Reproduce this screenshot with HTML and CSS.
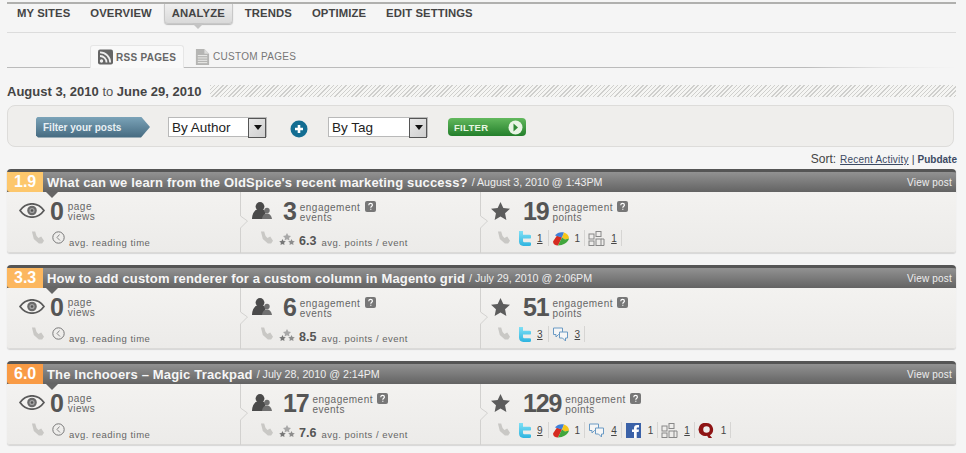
FILE: index.html
```html
<!DOCTYPE html>
<html lang="en">
<head>
<meta charset="utf-8">
<title>Analyze</title>
<link rel="stylesheet" href="styles.css">
</head>
<body>
<svg class="defs" width="0" height="0">
  <defs><linearGradient id="g-tw" x1="0" y1="0" x2="0" y2="1"><stop offset="0" stop-color="#7fe0f5"/><stop offset="1" stop-color="#2fb4e0"/></linearGradient></defs>
  <symbol id="i-eye" viewBox="0 0 26 15"><path d="M1 7.500C5 2 9 .8 13 .8S21 2 25 7.500C21 13 17 14.200 13 14.200S5 13 1 7.500Z" fill="#f4f3f1" stroke="#5a5a5a" stroke-width="1.700"/><circle cx="13" cy="7.500" r="4.800" fill="#6b6b6b"/><circle cx="13" cy="7.500" r="2.600" fill="#a5a5a5"/><circle cx="13" cy="7.500" r="1.300" fill="#555"/></symbol>
  <symbol id="i-people" viewBox="0 0 20 17"><circle cx="8" cy="4.500" r="4.400" fill="#4a4a4a"/><path d="M0 17c0-5 2-8.500 5-9.500h6c1.500.5 2.500 1.300 3 2.500l-3 7Z" fill="#4a4a4a"/><circle cx="15" cy="8.500" r="2.700" fill="#707070"/><path d="M10 17c.2-3 2-5.500 5-5.500s4.500 2.500 5 5.500Z" fill="#707070"/></symbol>
  <symbol id="i-star" viewBox="0 0 20 19"><path d="M10 0l3 6.400 7 .8-5.200 4.700L16.200 19 10 15.400 3.800 19l1.400-7.100L0 7.200l7-.8Z" fill="#5c5c5c"/></symbol>
  <symbol id="i-hook" viewBox="0 0 14 13"><path d="M1 0h3.500l1.500 5 2 2 3-1.500L14 10l-2 3H8.500L3 8Z" fill="#c9c8c5"/></symbol>
  <symbol id="i-clock" viewBox="0 0 13 13"><circle cx="6.500" cy="6.500" r="5.700" fill="none" stroke="#777" stroke-width="1"/><path d="M7.500 3.500 5 6.500l3 3" fill="none" stroke="#888" stroke-width="1"/></symbol>
  <symbol id="i-stars" viewBox="0 0 16 13"><path d="M8 0l1.300 2.600 2.700.4-2 1.900.5 2.700L8 6.300 5.500 7.600 6 4.900 4 3l2.700-.4Z" fill="#a8a8a8"/><path d="M3.500 6l1 2 2.300.3-1.700 1.500.4 2.200-2-1.100-2 1.100.4-2.200L.2 8.300 2.500 8Z" fill="#777"/><path d="M12.500 6l1 2 2.300.3-1.700 1.500.4 2.200-2-1.100-2 1.100.4-2.200-1.700-1.500L11.500 8Z" fill="#8d8d8d"/></symbol>
  <symbol id="i-twitter" viewBox="0 0 13 15"><path d="M1 0h4v3.800h6.500a1.800 1.800 0 0 1 0 3.700H5v2.200c0 1 .8 1.500 1.700 1.500h4.800a1.800 1.800 0 0 1 0 3.700H5.500C2.800 15 1 13.200 1 10.500Z" fill="url(#g-tw)"/></symbol>
  <symbol id="i-buzz" viewBox="0 0 17 14"><path d="M1 10 5 4l5 2-4 8C3 14 1 12.500 1 10Z" fill="#d62b20"/><path d="M3 4c2-3 6-4 9-3l-2 5Z" fill="#3f7fd8"/><path d="M10 6l2-5c3 1 5 3 5 6L13 8Z" fill="#f5c518"/><path d="M6 14l4-8 3 2 4-1c-1 4-6 7-11 7Z" fill="#41a63c"/></symbol>
  <symbol id="i-bubbles" viewBox="0 0 16 15"><path d="M1 1h9v6.500H6L3.500 10V7.500H1Z" fill="#f6f6f6" stroke="#6a9ac4"/><path d="M7 5h8v6h-2v3l-3-3H7Z" fill="#f6f6f6" stroke="#6a9ac4"/></symbol>
  <symbol id="i-fb" viewBox="0 0 15 15"><rect width="15" height="15" fill="#3b62a8"/><path d="M8 15V9H6V6.500h2V5c0-2 1.200-3 3-3h2v2.500h-1.300c-.7 0-1 .3-1 1v1H13l-.4 2.500h-1.900v6Z" fill="#fff"/></symbol>
  <symbol id="i-squares" viewBox="0 0 17 15"><g fill="none" stroke="#888"><rect x="8" y=".5" width="5" height="5"/><rect x="1" y="3" width="5" height="5"/><rect x="1" y="10" width="5" height="4.500"/><rect x="8" y="8" width="5" height="6.500"/><path d="M13 8h3v6.500h-3"/></g></symbol>
  <symbol id="i-q" viewBox="0 0 15 16"><path d="M7.500 0a7 7 0 0 1 3.600 13l2.400 3H9.800l-1.700-2.500A7 7 0 1 1 7.500 0Zm0 3.500a3.500 3.500 0 1 0 0 7 3.500 3.500 0 0 0 0-7Z" fill="#8e1414"/></symbol>
  <symbol id="i-help" viewBox="0 0 11 11"><rect width="11" height="11" rx="2" fill="#777"/><path d="M3.700 4.200C3.800 3 4.600 2.400 5.600 2.400s1.800.7 1.800 1.600c0 1.300-1.600 1.300-1.600 2.700M5.800 7.800v1" fill="none" stroke="#fff" stroke-width="1.200"/></symbol>
  <symbol id="i-notch" viewBox="0 0 9 61"><path d="M.5 0v24l7 5-7 7v25" fill="none" stroke="#d2d1cf"/></symbol>
</svg>

<div class="page">
  <nav class="nav">
    <a class="nav-item">MY SITES</a>
    <a class="nav-item">OVERVIEW</a>
    <a class="nav-item nav-active">ANALYZE</a>
    <a class="nav-item">TRENDS</a>
    <a class="nav-item">OPTIMIZE</a>
    <a class="nav-item">EDIT SETTINGS</a>
  </nav>

  <div class="subtabs">
    <a class="subtab subtab-active">
      <svg class="ic-tab" viewBox="0 0 15 15"><rect width="15" height="15" rx="2" fill="#666"/><circle cx="3.500" cy="11.500" r="1.700" fill="#eee"/><path d="M2 6.500a6.500 6.500 0 0 1 6.500 6.500M2 2.800A10.200 10.200 0 0 1 12.200 13" fill="none" stroke="#eee" stroke-width="1.800"/></svg>
      RSS PAGES
    </a>
    <a class="subtab">
      <svg class="ic-tab" viewBox="0 0 14 17"><path d="M0 0h9l5 5v12H0Z" fill="#b5b5b3"/><path d="M9 0l5 5H9Z" fill="#dcdcda"/><path d="M2 7h10M2 9.500h10M2 12h10M2 14.500h10" stroke="#efefed"/></svg>
      CUSTOM PAGES
    </a>
  </div>

  <div class="range">
    <span class="range-text"><b>August 3, 2010</b> to <b>June 29, 2010</b></span>
    <span class="hatch"></span>
  </div>

  <div class="filter">
    <span class="filter-label">Filter your posts</span>
    <span class="sel sel-author"><select><option>By Author</option></select></span>
    <svg class="plus" viewBox="0 0 18 18"><circle cx="9" cy="9" r="8.500" fill="#136d92"/><path d="M9 5v8M5 9h8" stroke="#fff" stroke-width="2.600"/></svg>
    <span class="sel sel-tag"><select><option>By Tag</option></select></span>
    <a class="filter-btn">FILTER<svg class="go" viewBox="0 0 15 15"><circle cx="7.500" cy="7.500" r="7" fill="#e8f4e4"/><path d="M5.500 3.500 10 7.500l-4.500 4Z" fill="#2f8a34"/></svg></a>
  </div>

  <div class="sort">
    <span class="sort-label">Sort:</span>
    <a class="sort-link">Recent Activity</a>
    <span class="sort-sep">|</span>
    <b class="sort-cur">Pubdate</b>
  </div>

  <article class="card">
    <header class="card-head">
      <span class="score score-a">1.9</span>
      <h2 class="title">What can we learn from the OldSpice's recent marketing success?</h2>
      <span class="when">/ August 3, 2010 @ 1:43PM</span>
      <a class="view">View post</a>
    </header>
    <div class="card-body">
      <section class="col col-views">
        <div class="top"><svg class="ic-eye"><use href="#i-eye"/></svg><span class="num num-views">0</span><span class="lab">page<br>views</span></div>
        <div class="bot bot-views"><svg class="ic-hook"><use href="#i-hook"/></svg><svg class="ic-clock"><use href="#i-clock"/></svg><span class="small">avg. reading time</span></div>
      </section>
      <section class="col col-events">
        <svg class="notch"><use href="#i-notch"/></svg>
        <div class="top"><svg class="ic-people"><use href="#i-people"/></svg><span class="num">3</span><span class="lab">engagement <svg class="ic-help"><use href="#i-help"/></svg><br>events</span></div>
        <div class="bot bot-events"><svg class="ic-hook"><use href="#i-hook"/></svg><svg class="ic-stars"><use href="#i-stars"/></svg><b class="avg">6.3</b><span class="small">avg. points / event</span></div>
      </section>
      <section class="col col-points">
        <svg class="notch"><use href="#i-notch"/></svg>
        <div class="top"><svg class="ic-star"><use href="#i-star"/></svg><span class="num">19</span><span class="lab">engagement <svg class="ic-help"><use href="#i-help"/></svg><br>points</span></div>
        <div class="bot bot-points"><svg class="ic-hook"><use href="#i-hook"/></svg>
          <span class="src"><svg class="ic-src"><use href="#i-twitter"/></svg><a class="cnt">1</a></span>
          <span class="src"><svg class="ic-src ic-wide"><use href="#i-buzz"/></svg><span class="cnt-plain">1</span></span>
          <span class="src"><svg class="ic-src ic-wide"><use href="#i-squares"/></svg><a class="cnt">1</a></span>
        </div>
      </section>
    </div>
  </article>

  <article class="card">
    <header class="card-head">
      <span class="score score-b">3.3</span>
      <h2 class="title">How to add custom renderer for a custom column in Magento grid</h2>
      <span class="when">/ July 29, 2010 @ 2:06PM</span>
      <a class="view">View post</a>
    </header>
    <div class="card-body">
      <section class="col col-views">
        <div class="top"><svg class="ic-eye"><use href="#i-eye"/></svg><span class="num num-views">0</span><span class="lab">page<br>views</span></div>
        <div class="bot bot-views"><svg class="ic-hook"><use href="#i-hook"/></svg><svg class="ic-clock"><use href="#i-clock"/></svg><span class="small">avg. reading time</span></div>
      </section>
      <section class="col col-events">
        <svg class="notch"><use href="#i-notch"/></svg>
        <div class="top"><svg class="ic-people"><use href="#i-people"/></svg><span class="num">6</span><span class="lab">engagement <svg class="ic-help"><use href="#i-help"/></svg><br>events</span></div>
        <div class="bot bot-events"><svg class="ic-hook"><use href="#i-hook"/></svg><svg class="ic-stars"><use href="#i-stars"/></svg><b class="avg">8.5</b><span class="small">avg. points / event</span></div>
      </section>
      <section class="col col-points">
        <svg class="notch"><use href="#i-notch"/></svg>
        <div class="top"><svg class="ic-star"><use href="#i-star"/></svg><span class="num">51</span><span class="lab">engagement <svg class="ic-help"><use href="#i-help"/></svg><br>points</span></div>
        <div class="bot bot-points"><svg class="ic-hook"><use href="#i-hook"/></svg>
          <span class="src"><svg class="ic-src"><use href="#i-twitter"/></svg><a class="cnt">3</a></span>
          <span class="src"><svg class="ic-src ic-wide"><use href="#i-bubbles"/></svg><a class="cnt">3</a></span>
        </div>
      </section>
    </div>
  </article>

  <article class="card">
    <header class="card-head">
      <span class="score score-c">6.0</span>
      <h2 class="title">The Inchooers – Magic Trackpad</h2>
      <span class="when">/ July 28, 2010 @ 2:14PM</span>
      <a class="view">View post</a>
    </header>
    <div class="card-body">
      <section class="col col-views">
        <div class="top"><svg class="ic-eye"><use href="#i-eye"/></svg><span class="num num-views">0</span><span class="lab">page<br>views</span></div>
        <div class="bot bot-views"><svg class="ic-hook"><use href="#i-hook"/></svg><svg class="ic-clock"><use href="#i-clock"/></svg><span class="small">avg. reading time</span></div>
      </section>
      <section class="col col-events">
        <svg class="notch"><use href="#i-notch"/></svg>
        <div class="top"><svg class="ic-people"><use href="#i-people"/></svg><span class="num">17</span><span class="lab">engagement <svg class="ic-help"><use href="#i-help"/></svg><br>events</span></div>
        <div class="bot bot-events"><svg class="ic-hook"><use href="#i-hook"/></svg><svg class="ic-stars"><use href="#i-stars"/></svg><b class="avg">7.6</b><span class="small">avg. points / event</span></div>
      </section>
      <section class="col col-points">
        <svg class="notch"><use href="#i-notch"/></svg>
        <div class="top"><svg class="ic-star"><use href="#i-star"/></svg><span class="num">129</span><span class="lab">engagement <svg class="ic-help"><use href="#i-help"/></svg><br>points</span></div>
        <div class="bot bot-points"><svg class="ic-hook"><use href="#i-hook"/></svg>
          <span class="src"><svg class="ic-src"><use href="#i-twitter"/></svg><a class="cnt">9</a></span>
          <span class="src"><svg class="ic-src ic-wide"><use href="#i-buzz"/></svg><span class="cnt-plain">1</span></span>
          <span class="src"><svg class="ic-src ic-wide"><use href="#i-bubbles"/></svg><a class="cnt">4</a></span>
          <span class="src"><svg class="ic-src ic-wide"><use href="#i-fb"/></svg><span class="cnt-plain">1</span></span>
          <span class="src"><svg class="ic-src ic-wide"><use href="#i-squares"/></svg><a class="cnt">1</a></span>
          <span class="src"><svg class="ic-src ic-wide"><use href="#i-q"/></svg><span class="cnt-plain">1</span></span>
        </div>
      </section>
    </div>
  </article>
</div>
</body>
</html>
```

FILE: styles.css
```css
* { box-sizing: border-box; }
html, body { height: 100%; }
body {
  margin: 0;
  background: #f5f5f5;
  font-family: "Liberation Sans", Arial, sans-serif;
  color: #444;
  overflow: hidden;
}
.defs { display: block; height: 0; }
.page { padding: 2px 10px 0 7px; }

.nav {
  display: flex;
  height: 31px;
  border-top: 2px solid #b0b0ae;
  border-bottom: 1px solid #dcdcdc;
  padding-left: 10px;
  gap: 20px;
}
.nav-item {
  font-size: 11.300px;
  font-weight: bold;
  letter-spacing: .1px;
  line-height: 18px;
  color: #444;
  white-space: nowrap;
}
.nav-active {
  position: relative;
  height: 20px;
  margin: 0 -8px;
  padding: 0 7px;
  background: linear-gradient(#efefef, #d9d9d9);
  border: 1px solid #c8c8c8;
  border-top: 0;
  border-radius: 0 0 4px 4px;
  box-shadow: 0 1px 1px #bbb;
}
.nav-active::after {
  content: "";
  position: absolute;
  left: 27px;
  top: 19px;
  border: 6px solid transparent;
  border-bottom: 0;
  border-top-color: #c4c4c4;
}

.subtabs {
  display: flex;
  height: 35px;
  padding: 12px 0 0 83px;
  border-bottom: 1px solid #c0c0c0;
  border-image: linear-gradient(to right, #bbb 84%, #e8e8e8 93%, #f5f5f5) 1;
  gap: 4px;
}
.subtab {
  display: flex;
  align-items: center;
  height: 23px;
  padding: 0 7px;
  gap: 3px;
  font-size: 10px;
  letter-spacing: .3px;
  color: #777;
  white-space: nowrap;
}
.subtab-active {
  width: 94px;
  font-weight: bold;
  color: #666;
  background: #f9f9f9;
  border: 1px solid #e6e6e6;
  border-bottom: 0;
  border-radius: 3px 3px 0 0;
}
.ic-tab { width: 15px; height: 16px; flex: none; }

.range {
  display: flex;
  align-items: center;
  height: 22px;
  margin-top: 12px;
  gap: 9px;
}
.range-text { font-size: 13px; color: #555; white-space: nowrap; }
.range-text b { color: #444; }
.hatch {
  flex: 1;
  height: 12px;
  background: repeating-linear-gradient(135deg, #cfcfcd 0 1px, #f5f5f3 1px 3px);
}

.filter {
  display: flex;
  align-items: center;
  height: 42px;
  margin-top: 3px;
  margin-right: 2px;
  padding: 2px 0 0 28px;
  background: #efeeec;
  border: 1px solid #dddcda;
  border-radius: 8px;
}
.filter-label {
  width: 114px;
  height: 21px;
  padding-left: 7px;
  font-size: 10px;
  font-weight: bold;
  line-height: 21px;
  color: #e8f0f4;
  background: linear-gradient(#7ba3b8, #44697f);
  clip-path: polygon(0 2px, 2px 0, 105px 0, 114px 50%, 105px 100%, 2px 100%, 0 calc(100% - 2px));
}
.sel {
  position: relative;
  display: block;
  height: 20px;
  background: #fff;
  border: 1px solid #b9b9b9;
}
.sel::after {
  content: "";
  position: absolute;
  right: 0;
  top: 0;
  width: 16px;
  height: 18px;
  border: 1px solid #555;
  background: linear-gradient(135deg, #e8e8e8, #cfcfcf);
}
.sel::before {
  content: "";
  position: absolute;
  right: 4px;
  top: 7px;
  z-index: 1;
  border: 4px solid transparent;
  border-bottom: 0;
  border-top: 5px solid #111;
}
.sel select {
  width: 100%;
  height: 18px;
  padding: 0 0 0 3px;
  border: 0;
  background: none;
  appearance: none;
  font: 13.500px/18px "Liberation Sans", Arial, sans-serif;
  color: #222;
}
.sel-author { width: 99px; margin-left: 18px; }
.sel-tag { width: 100px; }
.plus { width: 18px; height: 18px; margin: 3px 20px 0 23px; flex: none; }
.filter-btn {
  display: flex;
  align-items: center;
  justify-content: space-between;
  width: 78px;
  height: 18px;
  margin-left: 20px;
  padding: 0 3px 0 6px;
  font-size: 9.500px;
  font-weight: bold;
  letter-spacing: .3px;
  color: #e8f6e2;
  background: linear-gradient(#62b85d, #237f2b);
  border-radius: 4px;
}
.go { width: 15px; height: 15px; }

.sort {
  display: flex;
  justify-content: flex-end;
  align-items: baseline;
  height: 22px;
  margin-right: -1px;
  padding-top: 5px;
  gap: 3px;
  font-size: 10px;
}
.sort-label { font-size: 12px; color: #444; margin-right: 1px; }
.sort-link { text-decoration: underline; color: #3c4a63; letter-spacing: .2px; }
.sort-sep { color: #445; font-size: 11px; }
.sort-cur { color: #3c4a63; }

.card {
  height: 84px;
  margin-bottom: 12px;
  box-shadow: 0 1px 1px #d6d6d6;
  border-radius: 0 0 3px 3px;
}
.card-head {
  display: flex;
  align-items: center;
  height: 23px;
  padding-right: 4px;
  border-top: 3px solid #555;
  background: linear-gradient(#929292, #636363);
  border-radius: 4px 4px 0 0;
  box-shadow: 0 1px 1px #999;
  color: #fff;
  white-space: nowrap;
}
.score {
  position: relative;
  width: 36px;
  height: 20px;
  padding-left: 7px;
  font-size: 16px;
  font-weight: bold;
  line-height: 20px;
  color: #fff;
  border-radius: 0 0 0 3px;
}
.score::after {
  content: "";
  position: absolute;
  left: 39px;
  top: 20px;
  z-index: 1;
  border: 6px solid transparent;
  border-bottom: 0;
  border-top-color: #666;
}
.score-a { background: #fdc76c; }
.score-b { background: #fcb75f; }
.score-c { background: #f99b45; }
.title {
  margin: 0 0 0 4px;
  font-size: 13px;
  font-weight: bold;
  letter-spacing: .16px;
  color: #f6f6f6;
}
.when { margin-left: 4px; font-size: 10.700px; color: #eee; }
.view { margin-left: auto; font-size: 10px; color: #eee; letter-spacing: .2px; }

.card-body {
  display: grid;
  grid-template-columns: 233px 240px 1fr;
  height: 61px;
  background: linear-gradient(#f3f2f0, #ecebe9);
  border-bottom: 1px solid #dbdad8;
  border-radius: 0 0 3px 3px;
}
.col { position: relative; display: flex; flex-direction: column; }
.notch { position: absolute; left: 0; top: 0; width: 9px; height: 61px; }
.top { display: flex; align-items: center; height: 37px; }
.bot { display: flex; align-items: center; height: 23px; }
.num {
  font-size: 25px;
  font-weight: bold;
  line-height: 26px;
  letter-spacing: -1.200px;
  color: #555;
}
.lab {
  margin-top: 2px;
  margin-left: 4px;
  font-size: 10px;
  line-height: 10px;
  letter-spacing: .5px;
  color: #666;
  white-space: nowrap;
}
.small { font-size: 9.500px; letter-spacing: .5px; color: #666; white-space: nowrap; }
.avg { font-size: 12.500px; color: #555; margin-left: 4px; margin-top: 1px; }

.col-views .top { padding-left: 12px; }
.ic-eye { width: 26px; height: 15px; }
.col-views .num { margin-left: 5px; }
.col-views .lab { margin-left: 5px; }
.bot-views { padding-left: 24px; }
.ic-hook { width: 13px; height: 13px; margin-top: -7px; flex: none; }
.ic-clock { width: 13px; height: 13px; margin-left: 8px; margin-top: -7px; flex: none; }
.bot-views .small { margin-left: 4px; margin-top: 3px; }

.col-events .top { padding-left: 12px; }
.ic-people { width: 20px; height: 17px; }
.col-events .num { margin-left: 11px; }
.ic-help { width: 11px; height: 11px; vertical-align: -1px; margin-left: 1px; }
.bot-events { padding-left: 20px; }
.ic-stars { width: 16px; height: 13px; margin-left: 6px; margin-top: -3px; }
.bot-events .small { margin-left: 5px; margin-top: 4px; }

.col-points .top { padding-left: 11px; }
.ic-star { width: 19px; height: 18px; }
.col-points .num { margin-left: 13px; }
.bot-points { padding-left: 17px; }
.src {
  display: flex;
  align-items: center;
  height: 16px;
  margin-left: 8px;
  margin-top: -5px;
  padding-right: 4px;
  gap: 6px;
  border-right: 1px solid #d6d5d3;
}
.src:first-of-type { padding-right: 5px; }
.src + .src { margin-left: 3px; }
.ic-src { width: 13px; height: 15px; flex: none; }
.ic-wide { width: 17px; }
.cnt { font-size: 10px; color: #444; text-decoration: underline; }
.cnt-plain { font-size: 10px; color: #444; }
```
